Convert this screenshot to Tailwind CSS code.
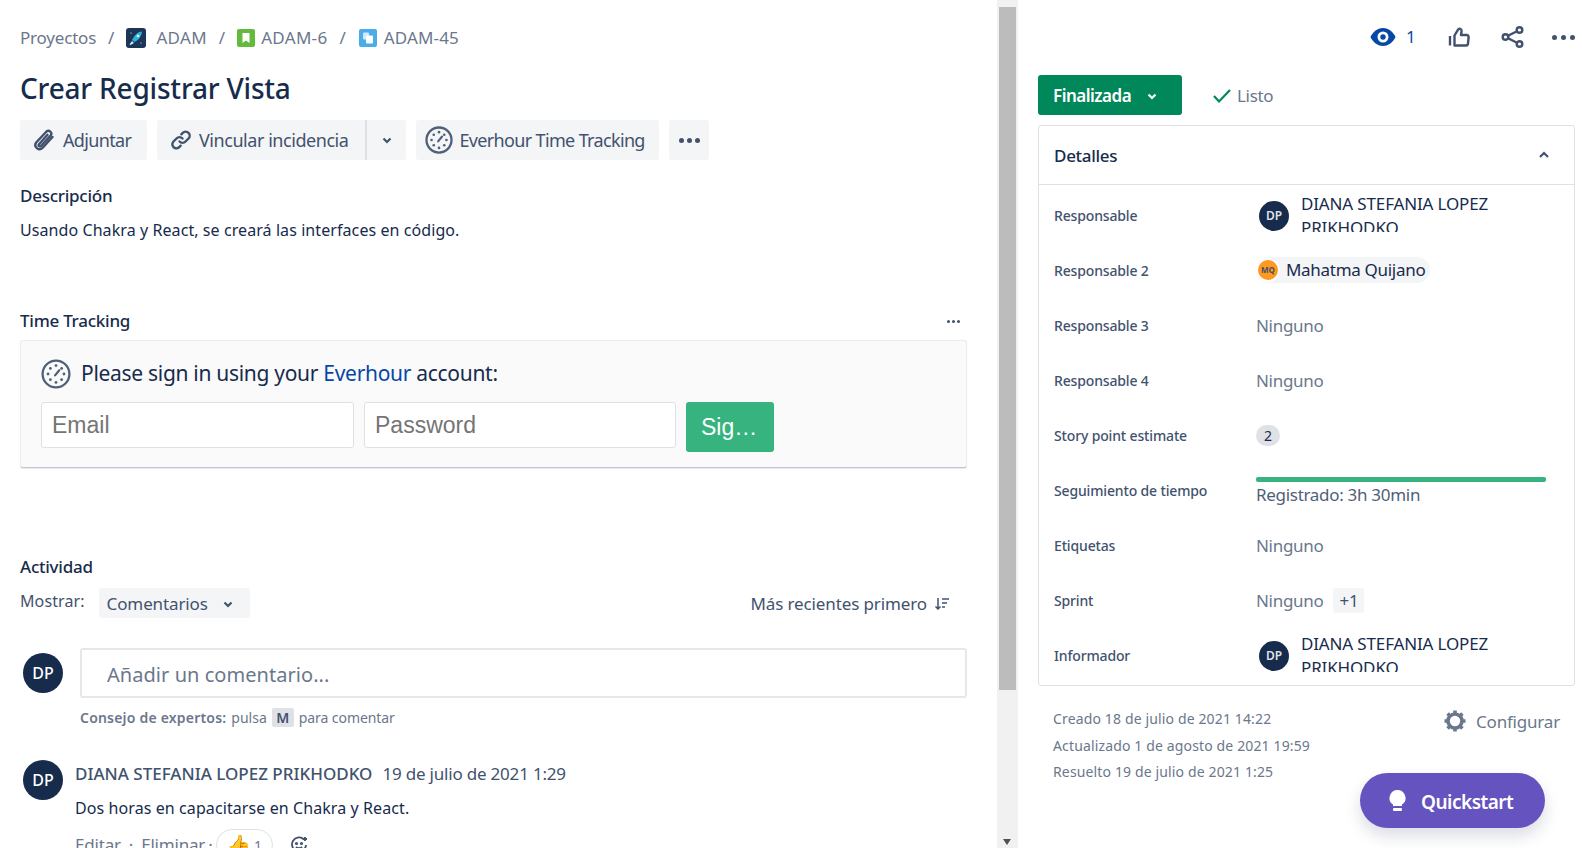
<!DOCTYPE html>
<html lang="es">
<head>
  <meta charset="UTF-8">
  <title>ADAM-45</title>
  <script src="https://cdn.jsdelivr.net/npm/@tailwindcss/browser@4"></script>
</head>
<body class="h-[848px] overflow-hidden bg-white font-['Noto_Sans','Open_Sans',sans-serif] text-[#172b4d]">
  <div class="flex h-[848px]">
    <!-- columna izquierda -->
    <main class="w-[997px] h-[848px] overflow-hidden pl-5 pr-[30px] pt-[26px]">
      <nav class="flex items-center h-6 text-[17px] text-[#6b778c]">
        <span class="tracking-[-0.2px]">Proyectos</span><span class="mx-3">/</span>
        <svg class="w-5 h-5 mr-[10px]" viewBox="0 0 20 20"><rect width="20" height="20" rx="3" fill="#1d3557"/><path d="M16 3.500c-3.500.3-6.500 2.500-8.500 6L6 12l2.500 2 2.500-1.500c3-2 4.800-5.500 5-9z" fill="#2bb5d8"/><path d="M6 13l-2.500 3.500 1 .5L8 15z" fill="#c9f0fa"/><circle cx="12" cy="8" r="1.300" fill="#fff"/><circle cx="5" cy="5" r=".6" fill="#fff"/><circle cx="15" cy="15" r=".6" fill="#fff"/></svg>
        <span class="tracking-[0.3px]">ADAM</span><span class="mx-[12px]">/</span>
        <svg class="w-[18px] h-[18px] mr-[6px]" viewBox="0 0 18 18"><rect width="18" height="18" rx="2" fill="#63ba3c"/><path d="M5.500 4h7v10l-3.500-2.600L5.500 14z" fill="#fff"/></svg>
        <span class="tracking-[0.3px]">ADAM-6</span><span class="mx-[12px]">/</span>
        <svg class="w-[18px] h-[18px] ml-px mr-[7px]" viewBox="0 0 18 18"><rect width="18" height="18" rx="2" fill="#4bade8"/><rect x="4" y="3.500" width="6" height="7" rx="1" fill="#fff" opacity=".75"/><rect x="7" y="6.500" width="7" height="8" rx="1" fill="#fff"/></svg>
        <span class="tracking-[0.15px]">ADAM-45</span>
      </nav>

      <h1 class="mt-5 text-[28px] leading-[36px] font-medium tracking-[-0.2px]">Crear Registrar Vista</h1>

      <div class="mt-[14px] flex gap-[10px] text-[18px] tracking-[-0.65px] text-[#42526e]">
        <button class="w-[127px] h-10 pl-3 flex items-center gap-[7px] rounded-[3px] bg-[#f4f5f7]">
          <svg class="w-6 h-6" viewBox="0 0 24 24" fill="none" stroke="#42526e" stroke-width="2.400" stroke-linecap="round"><path d="M20.500 9 10.500 20a4.200 4.200 0 0 1-6.300-5.500L14.500 3.500a2.900 2.900 0 0 1 4.300 3.800L9 18a1.300 1.300 0 0 1-2-1.700l8.500-9.500"/></svg>
          Adjuntar
        </button>
        <div class="flex h-10 rounded-[3px] bg-[#f4f5f7]">
          <button class="pl-3 pr-[17px] flex items-center gap-[6px] tracking-[-0.45px]">
            <svg class="w-6 h-6" viewBox="0 0 24 24" fill="none" stroke="#42526e" stroke-width="2.400" stroke-linecap="round"><path d="M10.500 13.500a4 4 0 0 0 6 0l3-3a4 4 0 0 0-5.700-5.700l-1.500 1.500"/><path d="M13.500 10.500a4 4 0 0 0-6 0l-3 3a4 4 0 0 0 5.700 5.700l1.500-1.500"/></svg>
            Vincular incidencia
          </button>
          <button class="w-[41px] border-l-2 border-[#dfe1e6] flex items-center justify-center">
            <svg class="w-4 h-4" viewBox="0 0 16 16" fill="none" stroke="#42526e" stroke-width="2.200"><path d="m4.500 6.500 3.500 3.500 3.500-3.500"/></svg>
          </button>
        </div>
        <button class="w-[243px] h-10 pl-[9px] flex items-center gap-[6px] rounded-[3px] bg-[#f4f5f7]">
          <svg class="w-7 h-7" viewBox="0 0 32 32" fill="none" stroke="#505f79"><circle cx="16" cy="16" r="14.300" stroke-width="2.600"/><path d="m15 17.500 4.500-5.500" stroke-width="2.400" stroke-linecap="round"/><g fill="#505f79" stroke="none"><circle cx="16" cy="7" r="1.500"/><circle cx="10" cy="10" r="1.500"/><circle cx="7.500" cy="16" r="1.500"/><circle cx="10" cy="22" r="1.500"/><circle cx="16" cy="25" r="1.500"/><circle cx="22" cy="22" r="1.500"/><circle cx="24.500" cy="16" r="1.500"/><circle cx="22" cy="10" r="1.500"/></g></svg>
          Everhour Time Tracking
        </button>
        <button class="h-10 w-10 flex items-center justify-center gap-[3px] rounded-[3px] bg-[#f4f5f7]">
          <i class="block w-[5px] h-[5px] rounded-full bg-[#42526e]"></i><i class="block w-[5px] h-[5px] rounded-full bg-[#42526e]"></i><i class="block w-[5px] h-[5px] rounded-full bg-[#42526e]"></i>
        </button>
      </div>

      <h2 class="mt-6 text-[17px] leading-6 font-medium tracking-[-0.25px]">Descripción</h2>
      <p class="mt-[10px] text-[16px] leading-6 tracking-[0.08px]">Usando Chakra y React, se creará las interfaces en código.</p>

      <div class="mt-[67px] flex items-center justify-between h-6">
        <h2 class="text-[17px] font-medium tracking-[-0.25px]">Time Tracking</h2>
        <div class="flex gap-[2px] mr-[7px]"><i class="block w-[3px] h-[3px] rounded-full bg-[#42526e]"></i><i class="block w-[3px] h-[3px] rounded-full bg-[#42526e]"></i><i class="block w-[3px] h-[3px] rounded-full bg-[#42526e]"></i></div>
      </div>
      <section class="mt-[7px] h-[128px] rounded-[3px] border border-[#ebecf0] border-b-[#c1c7d0] bg-[#fafafa] px-5 pt-4 shadow-[0_1px_1px_rgba(9,30,66,0.1)]">
        <div class="flex items-center gap-[10px] h-[34px] text-[21px] tracking-[-0.3px]">
          <svg class="w-[30px] h-[30px]" viewBox="0 0 32 32" fill="none" stroke="#505f79"><circle cx="16" cy="16" r="14.300" stroke-width="2.400"/><path d="m15 17.500 4.500-5.500" stroke-width="2.400" stroke-linecap="round"/><g fill="#505f79" stroke="none"><circle cx="16" cy="7" r="1.500"/><circle cx="10" cy="10" r="1.500"/><circle cx="7.500" cy="16" r="1.500"/><circle cx="10" cy="22" r="1.500"/><circle cx="16" cy="25" r="1.500"/><circle cx="22" cy="22" r="1.500"/><circle cx="24.500" cy="16" r="1.500"/><circle cx="22" cy="10" r="1.500"/></g></svg>
          <p>Please sign in using your <a class="text-[#0747a6]">Everhour</a> account:</p>
        </div>
        <div class="mt-[11px] flex items-start gap-[10px] text-[23px] font-['Liberation_Sans',sans-serif]">
          <div class="w-[313px] h-[46px] px-[10px] flex items-center rounded-[3px] border border-[#dfe1e6] bg-white text-[#757575]">Email</div>
          <div class="w-[312px] h-[46px] px-[10px] flex items-center rounded-[3px] border border-[#dfe1e6] bg-white text-[#757575]">Password</div>
          <div class="w-[88px] h-[50px] pl-[15px] flex items-center rounded-[3px] bg-[#36b37e] text-white">Sig…</div>
        </div>
      </section>

      <h2 class="mt-[87px] text-[17px] leading-6 font-medium tracking-[-0.25px]">Actividad</h2>
      <div class="mt-[9px] flex items-start justify-between pr-4">
        <div class="flex items-start">
          <span class="pt-px text-[16px] leading-6 text-[#42526e] tracking-[0.1px]">Mostrar:</span>
          <button class="ml-[14px] w-[151px] h-[30px] pt-[2px] pl-2 flex items-center gap-3 rounded-[3px] bg-[#f4f5f7] text-[17px] tracking-[-0.13px] text-[#42526e]">
            Comentarios
            <svg class="w-4 h-4" viewBox="0 0 16 16" fill="none" stroke="#42526e" stroke-width="2.200"><path d="m4.500 6.500 3.500 3.500 3.500-3.500"/></svg>
          </button>
        </div>
        <div class="flex items-center h-[30px] pt-[2px] gap-[6px] text-[17px] tracking-[-0.12px] text-[#42526e]">
          Más recientes primero
          <svg class="w-[18px] h-[18px]" viewBox="0 0 18 18" fill="none" stroke="#42526e" stroke-width="1.500"><path d="M5 3v11M2.500 11.500 5 14l2.500-2.500M9 4h7M9 8h5M9 12h3"/></svg>
        </div>
      </div>

      <div class="mt-[30px] flex">
        <div class="w-10 h-10 mt-[5px] ml-[3px] rounded-full bg-[#172b4d] text-white text-[16px] font-medium flex items-center justify-center">DP</div>
        <div class="ml-[17px] flex-1">
          <div class="h-[50px] pl-[25px] pt-[3px] flex items-center rounded-[3px] border-2 border-[#e6e7eb] text-[20px] tracking-[0.05px] text-[#6b778c]">Añadir un comentario...</div>
          <p class="mt-[9px] flex items-center h-5 text-[14px] text-[#6b778c]"><b class="font-semibold tracking-[0.2px]">Consejo de expertos:</b><span class="ml-[5px]">pulsa</span><kbd class="mx-[5px] w-[22px] h-[19px] text-center leading-[19px] rounded-[2px] bg-[#dfe1e6] font-semibold text-[#42526e] font-['Noto_Sans',sans-serif]">M</kbd><span class="tracking-[-0.07px]">para comentar</span></p>
        </div>
      </div>

      <div class="mt-[33px] flex">
        <div class="w-10 h-10 ml-[3px] rounded-full bg-[#172b4d] text-white text-[16px] font-medium flex items-center justify-center shrink-0">DP</div>
        <div class="ml-3 pt-[2px]">
          <p class="text-[17px] leading-6 text-[#42526e]"><span class="font-medium">DIANA STEFANIA LOPEZ PRIKHODKO</span><span class="ml-[10px] tracking-[-0.2px]">19 de julio de 2021 1:29</span></p>
          <p class="mt-[10px] text-[16px] leading-6 tracking-[0.09px]">Dos horas en capacitarse en Chakra y React.</p>
          <div class="mt-[9px] flex items-center h-8 text-[17px] tracking-[-0.2px] text-[#6b778c]">
            <span>Editar</span><span class="mx-2">·</span><span>Eliminar</span><span class="mx-[3px]">·</span>
            <span class="h-8 w-[57px] flex items-center justify-center gap-[3px] rounded-full border border-[#dfe1e6] text-[14px]"><span class="text-[20px] leading-none">👍</span>1</span>
            <svg class="ml-[17px] w-[18px] h-[18px]" viewBox="0 0 18 18" fill="none" stroke="#42526e" stroke-width="1.800"><path d="M14 3.500A7 7 0 1 0 16 9"/><circle cx="6.500" cy="7.500" r=".7"/><circle cx="11.500" cy="7.500" r=".7"/><path d="M6 11c1.500 1.500 4.500 1.500 6 0M15 1v4M13 3h4"/></svg>
          </div>
        </div>
      </div>
    </main>

    <!-- barra de scroll -->
    <div class="relative w-[21px] h-[848px] bg-[#f1f1f1] shrink-0">
      <div class="absolute left-[2px] top-[7px] w-[17px] h-[683px] bg-[#bcbcbc]"></div>
      <svg class="absolute left-[5px] bottom-[3px] w-[10px] h-[6px]" viewBox="0 0 10 6"><path d="M1 0h8L5 6z" fill="#505050"/></svg>
    </div>

    <!-- columna derecha -->
    <aside class="relative w-[564px] h-[848px] pl-5 pr-[7px]">
      <div class="h-[75px] flex items-start justify-end pt-[25px] text-[#0747a6]">
        <svg class="w-[26px] h-[24px]" viewBox="0 0 26 24"><path d="M13 3C7 3 2.500 7.500.5 12c2 4.500 6.500 9 12.500 9s10.500-4.500 12.500-9C23.500 7.500 19 3 13 3z" fill="#0747a6"/><circle cx="13" cy="12" r="5.500" fill="#fff"/><circle cx="13" cy="12" r="2.700" fill="#0747a6"/></svg>
        <span class="ml-[10px] w-[41px] text-[17px] leading-6">1</span>
        <svg class="w-6 h-6" viewBox="0 0 24 24" fill="none" stroke="#42526e" stroke-width="2.400" stroke-linejoin="round"><path d="M7.500 20.500H19a2 2 0 0 0 2-1.800l.6-6.500a2 2 0 0 0-2-2.200H14l.6-4a2 2 0 0 0-3.700-1.200L7.500 10.500z"/><path d="M3 11v9.500"/></svg>
        <svg class="ml-[30px] w-6 h-6" viewBox="0 0 24 24" fill="none" stroke="#42526e" stroke-width="2.400"><circle cx="18.500" cy="5" r="2.800"/><circle cx="4.500" cy="12" r="2.800"/><circle cx="18.500" cy="19" r="2.800"/><path d="m7 10.700 9-4.500M7 13.300l9 4.500"/></svg>
        <div class="ml-[27px] w-[23px] h-6 flex items-center gap-1"><i class="block w-[5px] h-[5px] rounded-full bg-[#42526e]"></i><i class="block w-[5px] h-[5px] rounded-full bg-[#42526e]"></i><i class="block w-[5px] h-[5px] rounded-full bg-[#42526e]"></i></div>
      </div>

      <div class="flex items-center h-10">
        <button class="w-[144px] h-10 pl-[15px] pt-px flex items-center gap-[13px] rounded-[3px] bg-[#00875a] text-white text-[17px] font-semibold tracking-[-0.5px]">
          Finalizada
          <svg class="w-4 h-4" viewBox="0 0 16 16" fill="none" stroke="#fff" stroke-width="2.200"><path d="m4.500 6.500 3.500 3.500 3.500-3.500"/></svg>
        </button>
        <svg class="ml-[30px] w-5 h-5" viewBox="0 0 20 20" fill="none" stroke="#00875a" stroke-width="2.200"><path d="m2 11 5 5.500L18 5"/></svg>
        <span class="ml-[5px] pt-px text-[17px] tracking-[-0.3px] text-[#6b778c]">Listo</span>
      </div>

      <section class="mt-[10px] w-[537px] h-[561px] rounded-[3px] border border-[#dfe1e6] overflow-hidden">
        <header class="h-[59px] pl-[15px] pr-[22px] flex items-center justify-between border-b border-[#dfe1e6]">
          <h2 class="pt-px text-[17px] font-medium tracking-[-0.3px]">Detalles</h2>
          <svg class="w-4 h-4" viewBox="0 0 16 16" fill="none" stroke="#42526e" stroke-width="2.200"><path d="m4 10 4-4 4 4"/></svg>
        </header>
        <dl class="grid grid-cols-[202px_1fr] auto-rows-[55px] pl-[15px] text-[14px] tracking-[-0.15px] text-[#42526e] items-center pt-[3px]">
          <dt class="font-medium">Responsable</dt>
          <dd class="flex items-center pl-[3px]">
            <span class="w-[30px] h-[30px] rounded-full bg-[#172b4d] text-[#dfe1e6] text-[12px] font-semibold flex items-center justify-center shrink-0">DP</span>
            <span class="ml-3 -mt-2 w-[220px] h-10 overflow-hidden text-[17px] leading-6 tracking-[-0.15px] text-[#172b4d]">DIANA STEFANIA LOPEZ PRIKHODKO</span>
          </dd>
          <dt class="font-medium">Responsable 2</dt>
          <dd class="flex -mt-[2px]">
            <span class="h-[26px] pr-[5px] flex items-center rounded-full bg-[#f4f5f7] text-[17px] tracking-[-0.3px] text-[#172b4d]">
              <span class="w-[24px] h-[24px] rounded-full bg-[#ff991f] border-2 border-white text-[#42526e] text-[8px] font-bold flex items-center justify-center tracking-normal mr-[6px]">MQ</span>
              Mahatma Quijano
            </span>
          </dd>
          <dt class="font-medium">Responsable 3</dt>
          <dd class="text-[17px] tracking-[-0.3px] text-[#6b778c]">Ninguno</dd>
          <dt class="font-medium">Responsable 4</dt>
          <dd class="text-[17px] tracking-[-0.3px] text-[#6b778c]">Ninguno</dd>
          <dt class="font-medium">Story point estimate</dt>
          <dd><span class="block w-6 h-[21px] rounded-full bg-[#dfe1e6] text-center text-[14px] leading-[21px] text-[#172b4d]">2</span></dd>
          <dt class="font-medium">Seguimiento de tiempo</dt>
          <dd class="pt-[3px]">
            <div class="w-[290px] h-[5px] rounded-[2px] bg-[#36b37e]"></div>
            <p class="mt-px text-[17px] leading-6 tracking-[-0.3px] text-[#505f79]">Registrado: 3h 30min</p>
          </dd>
          <dt class="font-medium">Etiquetas</dt>
          <dd class="text-[17px] tracking-[-0.3px] text-[#6b778c]">Ninguno</dd>
          <dt class="font-medium">Sprint</dt>
          <dd class="flex items-center text-[17px] tracking-[-0.3px] text-[#6b778c]">Ninguno<span class="ml-[10px] px-[6px] h-[25px] rounded-[3px] bg-[#f4f5f7] leading-[25px] text-[#42526e]">+1</span></dd>
          <dt class="font-medium">Informador</dt>
          <dd class="flex items-center pl-[3px]">
            <span class="w-[30px] h-[30px] rounded-full bg-[#172b4d] text-[#dfe1e6] text-[12px] font-semibold flex items-center justify-center shrink-0">DP</span>
            <span class="ml-3 -mt-2 w-[220px] h-10 overflow-hidden text-[17px] leading-6 tracking-[-0.15px] text-[#172b4d]">DIANA STEFANIA LOPEZ PRIKHODKO</span>
          </dd>
        </dl>
      </section>

      <div class="mt-5 pl-[15px] pr-[15px] flex justify-between">
        <div class="text-[14px] leading-[26.500px] tracking-[0.14px] text-[#6b778c]">
          <p>Creado 18 de julio de 2021 14:22</p>
          <p>Actualizado 1 de agosto de 2021 19:59</p>
          <p>Resuelto 19 de julio de 2021 1:25</p>
        </div>
        <div class="flex items-start gap-[9px] pt-[3px] text-[17px] tracking-[-0.2px] text-[#6b778c]">
          <svg class="w-6 h-6" viewBox="0 0 24 24" fill="none" stroke="#6b778c"><circle cx="12" cy="12" r="7" stroke-width="3.600"/><path d="M12 1.500v4M12 18.500v4M1.500 12h4M18.500 12h4M4.600 4.600l2.800 2.800M16.600 16.600l2.800 2.800M4.600 19.400l2.800-2.800M16.600 7.400l2.800-2.800" stroke-width="3.600"/></svg>
          Configurar
        </div>
      </div>

      <button class="absolute left-[342px] top-[773px] w-[185px] h-[55px] pl-[29px] flex items-center gap-[15px] rounded-full bg-[#6554c0] text-white text-[19px] font-semibold tracking-[-0.5px] shadow-[0_8px_16px_rgba(9,30,66,0.15)]">
        <svg class="w-[17px] h-[22px]" viewBox="0 0 17 22"><path d="M8.500 0a8 8 0 0 0-4.500 14.600V16h9v-1.400A8 8 0 0 0 8.500 0z" fill="#fff"/><rect x="4" y="18" width="9" height="3" rx="1" fill="#fff"/></svg>
        <span class="pt-[3px]">Quickstart</span>
      </button>
    </aside>
  </div>
</body>
</html>
